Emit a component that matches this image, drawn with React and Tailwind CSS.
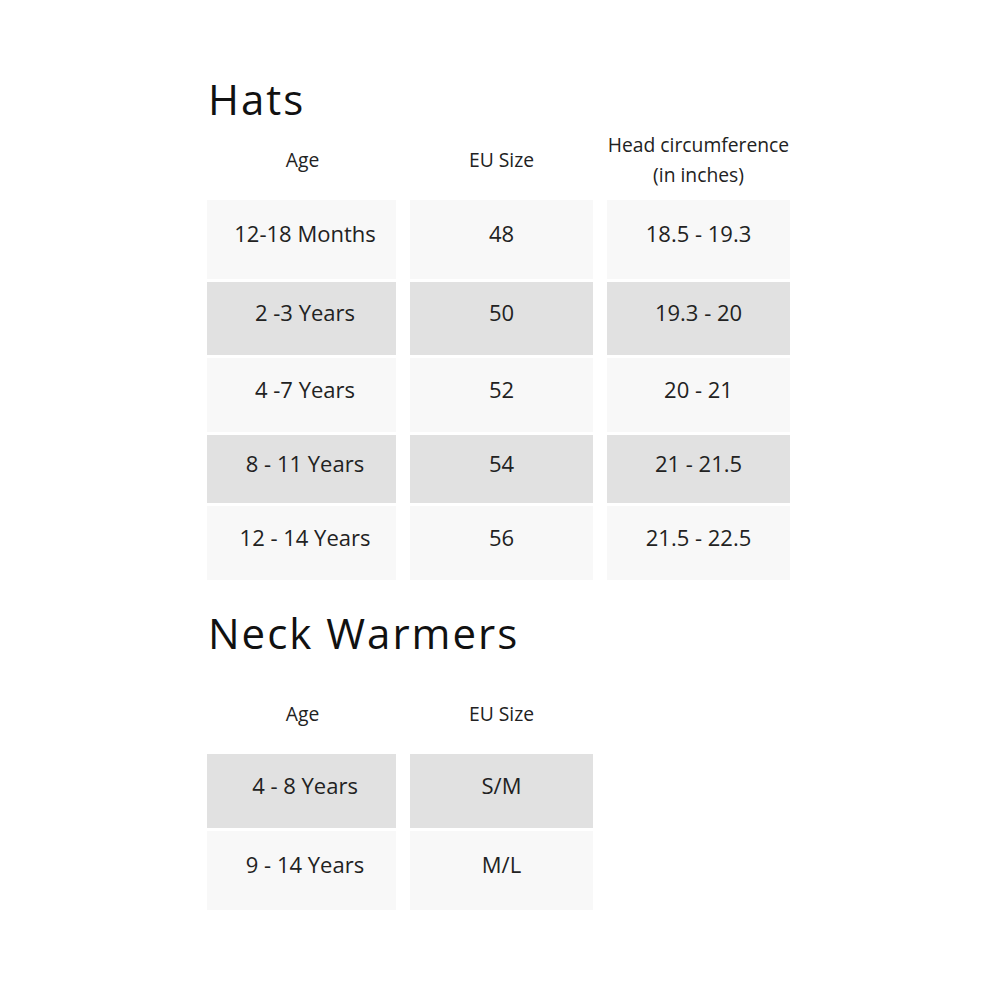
import React from "react";

const hats = [
  { age: "12-18 Months", eu: "48", head: "18.5 - 19.3", h: "h-[79px]", dark: false },
  { age: "2 -3 Years", eu: "50", head: "19.3 - 20", h: "h-[73px]", dark: true },
  { age: "4 -7 Years", eu: "52", head: "20 - 21", h: "h-[74px]", dark: false },
  { age: "8 - 11 Years", eu: "54", head: "21 - 21.5", h: "h-[68px]", dark: true },
  { age: "12 - 14 Years", eu: "56", head: "21.5 - 22.5", h: "h-[74px]", dark: false },
];

const neck = [
  { age: "4 - 8 Years", eu: "S/M", h: "h-[74px]", dark: true },
  { age: "9 - 14 Years", eu: "M/L", h: "h-[79px]", dark: false },
];

function Cell({ children, dark, h, first }) {
  return (
    <div
      className={`${h} flex items-center justify-center pb-[12px] text-[22px] ${
        dark ? "bg-[#e1e1e1]" : "bg-[#f8f8f8]"
      } ${first ? "pl-[7px]" : ""}`}
    >
      {children}
    </div>
  );
}

function Title({ children, className = "" }) {
  return (
    <h2 className={`text-[42px] leading-[48px] font-normal tracking-[2px] text-[#111] ${className}`}>
      {children}
    </h2>
  );
}

export default function App() {
  return (
    <div
      className="min-h-[1002px] bg-white text-[#222] pt-[75px] pl-[208px]"
      style={{ fontFamily: '"Open Sans", sans-serif' }}
    >
      <Title>Hats</Title>

      <div className="-ml-[1px] grid grid-cols-[189px_183px_183px] gap-x-[14px] mt-[7px] h-[60px] items-center text-center text-[19.3px] leading-[30px] whitespace-nowrap">
        <div className="pl-[2px]">Age</div>
        <div>EU Size</div>
        <div>
          Head circumference
          <br />
          (in inches)
        </div>
      </div>

      <div className="-ml-[1px] grid grid-cols-[189px_183px_183px] gap-x-[14px] gap-y-[3px] mt-[10px]">
        {hats.map((r) => (
          <React.Fragment key={r.age}>
            <Cell dark={r.dark} h={r.h} first>{r.age}</Cell>
            <Cell dark={r.dark} h={r.h}>{r.eu}</Cell>
            <Cell dark={r.dark} h={r.h}>{r.head}</Cell>
          </React.Fragment>
        ))}
      </div>

      <Title className="mt-[29px]">Neck Warmers</Title>

      <div className="-ml-[1px] grid grid-cols-[189px_183px] gap-x-[14px] mt-[42px] h-[30px] items-center text-center text-[19.3px] leading-[30px] whitespace-nowrap">
        <div className="pl-[2px]">Age</div>
        <div>EU Size</div>
      </div>

      <div className="-ml-[1px] grid grid-cols-[189px_183px] gap-x-[14px] gap-y-[3px] mt-[25px]">
        {neck.map((r) => (
          <React.Fragment key={r.age}>
            <Cell dark={r.dark} h={r.h} first>{r.age}</Cell>
            <Cell dark={r.dark} h={r.h}>{r.eu}</Cell>
          </React.Fragment>
        ))}
      </div>
    </div>
  );
}
